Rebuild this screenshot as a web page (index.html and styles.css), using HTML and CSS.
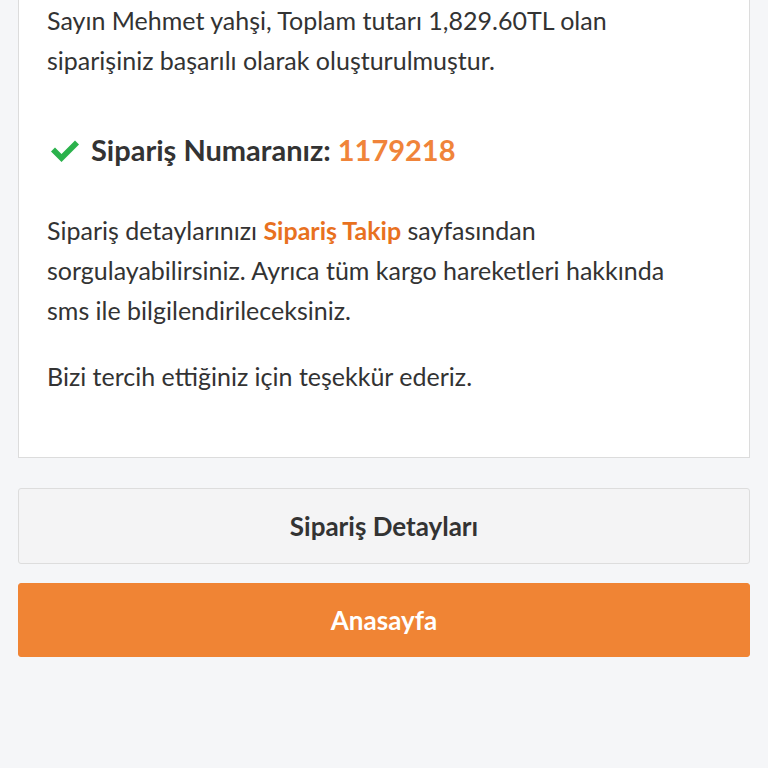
FILE: index.html
```html
<!DOCTYPE html>
<html lang="tr">
<head>
    <meta charset="UTF-8">
    <meta name="viewport" content="width=device-width, initial-scale=1.0">
    <title>Sipariş Tamamlandı</title>
    <link rel="stylesheet" href="styles.css">
</head>
<body>
    <div class="page">
        <div class="card">
            <p class="intro">Sayın Mehmet yahşi, Toplam tutarı 1,829.60TL olan siparişiniz başarılı olarak oluşturulmuştur.</p>

            <h2 class="order-no">
                <svg class="check" viewBox="0 0 32 26" width="32" height="26">
                    <path d="M2 14.5 L6 10.5 L12.5 17 L26 3.5 L30 7.5 L12.5 25 Z" fill="#2bb24c"/>
                </svg>
                <span>Sipariş Numaranız: <span class="accent">1179218</span></span>
            </h2>

            <p>Sipariş detaylarınızı <a href="#" class="link">Sipariş Takip</a> sayfasından sorgulayabilirsiniz. Ayrıca tüm kargo hareketleri hakkında sms ile bilgilendirileceksiniz.</p>

            <p>Bizi tercih ettiğiniz için teşekkür ederiz.</p>
        </div>

        <a href="#" class="btn btn-light">Sipariş Detayları</a>
        <a href="#" class="btn btn-orange">Anasayfa</a>
    </div>
</body>
</html>
```

FILE: styles.css
```css
/* Page */
body {
    margin: 0;
    background-color: #f5f6f8;
    font-family: Lato, "Open Sans", sans-serif;
    color: #333;
}

.page {
    padding: 0 18px;
}

/* Card with the message (top is scrolled away) */
.card {
    background-color: #fff;
    border: 1px solid #dcdcdc;
    border-top: none;
    padding: 0 50px 35px 28px;
    margin-bottom: 30px;
}

.card p {
    font-size: 25px;
    line-height: 40px;
    margin: 0 0 26px;
}

.card p.intro {
    margin-bottom: 50px;
}

.order-no {
    display: flex;
    align-items: center;
    gap: 10px;
    font-size: 29px;
    font-weight: 700;
    line-height: 40px;
    margin: 0 0 40px;
    color: #333;
}

.check {
    margin-left: 2px;
}

.accent {
    color: #f0843a;
}

.link {
    color: #e8711f;
    font-weight: 700;
    text-decoration: none;
}

/* Buttons */
.btn {
    display: block;
    text-align: center;
    text-decoration: none;
    font-size: 26px;
    font-weight: 700;
    border-radius: 3px;
    box-sizing: border-box;
}

.btn-light {
    background-color: #f4f4f5;
    border: 1px solid #dddddd;
    color: #333;
    padding: 18px 0;
    line-height: 38px;
    margin-bottom: 19px;
}

.btn-orange {
    background-color: #f08434;
    border: 1px solid #f08434;
    color: #fff;
    padding: 17px 0;
    line-height: 38px;
}
```
